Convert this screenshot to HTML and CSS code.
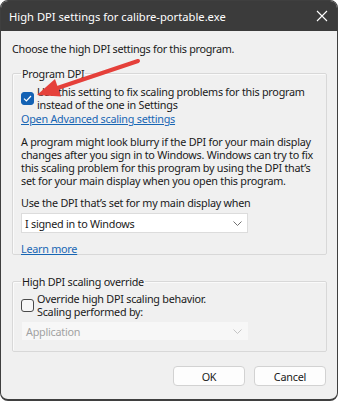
FILE: index.html
```html
<!DOCTYPE html>
<html>
<head>
<meta charset="utf-8">
<link rel="stylesheet" href="styles.css">
</head>
<body>
<div class="window">
  <div class="titlebar">
    <span class="title">High DPI settings for calibre-portable.exe</span>
    <svg class="close" width="12" height="12" viewBox="0 0 12 12"><path d="M1 1 L11 11 M11 1 L1 11" stroke="#ffffff" stroke-width="1.1" fill="none"/></svg>
  </div>
  <div class="content">
    <p class="intro">Choose the high DPI settings for this program.</p>
    <fieldset class="group group-dpi">
      <legend>Program DPI</legend>
      <label class="check-row">
        <span class="box checked"><svg width="9" height="7" viewBox="0 0 9 7"><path d="M1 3.6 L3.4 6 L8 1" stroke="#fff" stroke-width="1.2" fill="none"/></svg></span>
        <span class="check-text">Use this setting to fix scaling problems for this program<br>instead of the one in Settings</span>
      </label>
      <a class="link link-adv">Open Advanced scaling settings</a>
      <p class="para">A program might look blurry if the DPI for your main display<br>changes after you sign in to Windows. Windows can try to fix<br>this scaling problem for this program by using the DPI that’s<br>set for your main display when you open this program.</p>
      <p class="when">Use the DPI that’s set for my main display when</p>
      <div class="select">
        <span>I signed in to Windows</span>
        <svg width="9" height="5" viewBox="0 0 9 5"><path d="M0.5 0.5 L4.5 4.5 L8.5 0.5" stroke="#707070" stroke-width="1" fill="none"/></svg>
      </div>
      <a class="link link-learn">Learn more</a>
    </fieldset>
    <fieldset class="group group-override">
      <legend>High DPI scaling override</legend>
      <label class="check-row">
        <span class="box"></span>
        <span class="check-text">Override high DPI scaling behavior.<br>Scaling performed by:</span>
      </label>
      <div class="select disabled">
        <span>Application</span>
        <svg width="9" height="5" viewBox="0 0 9 5"><path d="M0.5 0.5 L4.5 4.5 L8.5 0.5" stroke="#c4c4c4" stroke-width="1" fill="none"/></svg>
      </div>
    </fieldset>
    <div class="buttons">
      <button class="btn">OK</button>
      <button class="btn">Cancel</button>
    </div>
  </div>
  <svg class="arrow" width="338" height="401" viewBox="0 0 338 401">
    <line x1="138" y1="61" x2="56" y2="88.5" stroke="#e5403a" stroke-width="4" stroke-linecap="round"/>
    <polygon points="37,95 55,79 61,96.5" fill="#e5403a"/>
  </svg>
</div>
</body>
</html>
```
FILE: styles.css
```css
* { box-sizing: border-box; }
html, body { margin: 0; padding: 0; background: #ffffff; }
body {
  font-family: "Noto Sans", "Open Sans", "DejaVu Sans", sans-serif;
  font-size: 10.8px;
  letter-spacing: -0.25px;
  color: #1a1a1a;
}
.window {
  position: relative;
  width: 338px;
  height: 401px;
  background: #f0f0f0;
  border: 1px solid #3f3f3f;
  border-bottom-width: 2px;
  border-radius: 8px;
  overflow: hidden;
  display: flex;
  flex-direction: column;
}
.titlebar {
  height: 30px;
  flex: none;
  background: #3b3b3b;
  display: flex;
  align-items: center;
  justify-content: space-between;
  padding: 0 9px 0 8px;
}
.title {
  color: #ffffff;
  font-size: 11.2px;
  letter-spacing: 0;
  line-height: 15px;
}
.close { display: block; }
.content {
  flex: 1;
  padding: 10px 10px 0 11px;
  display: flex;
  flex-direction: column;
}
p { margin: 0; }
.intro { line-height: 15px; letter-spacing: -0.3px; }
.group {
  margin: 0;
  border: 1px solid #d8d8d8;
  box-shadow: inset 1px 1px 0 #fafafa;
  border-radius: 2px;
  padding: 0 8px 0 8px;
  min-width: 0;
}
.group legend {
  padding: 0 1px;
  margin-left: 0;
  line-height: 15px;
}
.group-dpi {
  margin-top: 10px;
  height: 189px;
  display: flex;
  flex-direction: column;
}
.check-row {
  display: flex;
  align-items: center;
  gap: 3px;
  margin-top: 4px;
}
.check-text { line-height: 13px; white-space: nowrap; }
.box {
  width: 13px;
  height: 13px;
  flex: none;
  border-radius: 3px;
  border: 1px solid #4a4a4a;
  background: #f7f7f7;
  display: flex;
  align-items: center;
  justify-content: center;
}
.box.checked {
  background: #1462b4;
  border-color: #1462b4;
}
.link {
  color: #1866b4;
  text-decoration: underline;
  line-height: 14px;
  align-self: flex-start;
}
.link-adv { margin-top: 1px; }
.para {
  margin-top: 9px;
  line-height: 13px;
  white-space: nowrap;
  color: #1a1a1a;
}
.when { margin-top: 9px; line-height: 14px; }
.select {
  margin-top: 3px;
  width: 227px;
  height: 20px;
  background: #ffffff;
  border: 1px solid #dcdcdc;
  display: flex;
  align-items: center;
  justify-content: space-between;
  padding: 0 5px 0 3px;
}
.link-learn { margin-top: 9px; }
.group-override {
  margin-top: 19px;
  padding-bottom: 11px;
  display: flex;
  flex-direction: column;
}
.group-override .check-row { margin-top: 3px; }
.select.disabled {
  margin-top: 4px;
  margin-left: 1px;
  height: 18px;
  width: 226px;
  background: #f7f7f7;
  border-color: #f7f7f7;
  color: #a2a2a2;
}
.buttons {
  display: flex;
  justify-content: flex-end;
  gap: 9px;
  margin-top: 14px;
  padding-right: 1px;
}
.btn {
  font-family: inherit;
  font-size: 10.8px;
  letter-spacing: -0.2px;
  color: #1a1a1a;
  background: #fdfdfd;
  border: 1px solid #d2d2d2;
  border-radius: 4px;
  width: 72px;
  height: 20px;
  padding: 0;
}
.arrow {
  position: absolute;
  top: -1px;
  left: -1px;
  pointer-events: none;
}
```
